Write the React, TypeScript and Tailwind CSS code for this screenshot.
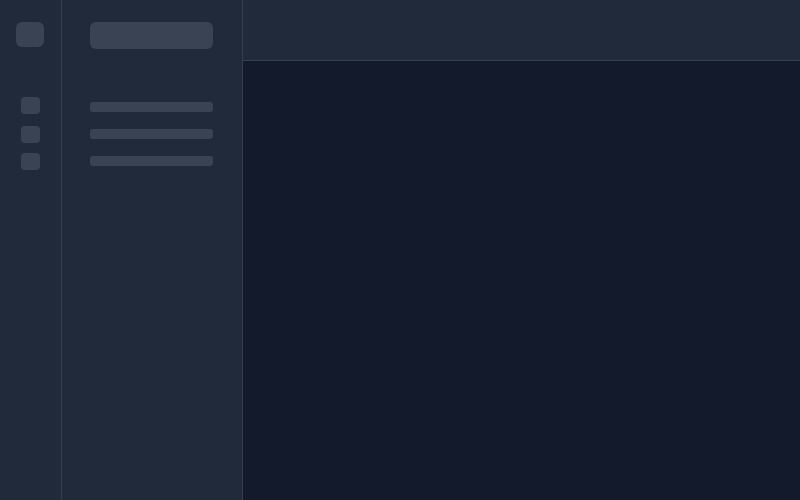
import React from "react";

const App: React.FC = () => {
  return (
    <div className="flex h-[500px] w-[800px] overflow-hidden bg-[#131a2b]">
      {/* icon rail */}
      <div className="flex w-[62px] flex-shrink-0 flex-col border-r border-[#363e4d] bg-[#212a3b]">
        <div className="ml-4 mt-[22px] h-[25px] w-[28px] rounded-md bg-[#3a4354]" />
        <div className="ml-[21px] mt-[50px] flex flex-col">
          <div className="h-[17px] w-[19px] rounded-[4px] bg-[#3a4354]" />
          <div className="mt-[12px] h-[17px] w-[19px] rounded-[4px] bg-[#3a4354]" />
          <div className="mt-[10px] h-[17px] w-[19px] rounded-[4px] bg-[#3a4354]" />
        </div>
      </div>

      {/* side panel */}
      <div className="flex w-[181px] flex-shrink-0 flex-col border-r border-[#363e4d] bg-[#212a3b] pl-[28px]">
        <div className="mt-[22px] h-[27px] w-[123px] rounded-md bg-[#3a4354]" />
        <div className="mt-[53px] flex flex-col gap-[17px]">
          <div className="h-[10px] w-[123px] rounded-[3px] bg-[#3a4354]" />
          <div className="h-[10px] w-[123px] rounded-[3px] bg-[#3a4354]" />
          <div className="h-[10px] w-[123px] rounded-[3px] bg-[#3a4354]" />
        </div>
      </div>

      {/* main */}
      <div className="flex min-w-0 flex-1 flex-col">
        <div className="h-[61px] flex-shrink-0 border-b border-[#363e4d] bg-[#212a3b]" />
        <div className="flex-1 bg-[#131a2b]" />
      </div>
    </div>
  );
};

export default App;
